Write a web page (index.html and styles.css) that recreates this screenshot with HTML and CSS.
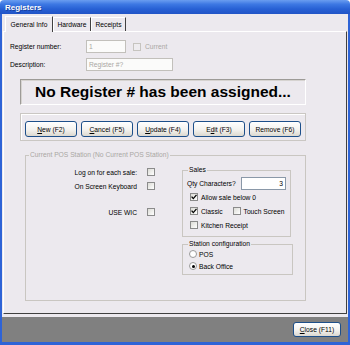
FILE: index.html
```html
<!DOCTYPE html>
<html lang="en">
<head>
    <meta charset="UTF-8">
    <title>Registers</title>
    <link rel="stylesheet" href="styles.css">
</head>
<body>
    <div class="window">
        <div class="titlebar"><span class="title">Registers</span></div>
        <div class="client">
            <div class="tabs">
                <div class="tab tab-general active">General Info</div>
                <div class="tab tab-hardware">Hardware</div>
                <div class="tab tab-receipts">Receipts</div>
            </div>
            <div class="panel">
                <div class="row row-number">
                    <label class="lbl">Register number:</label>
                    <div class="input input-number">1</div>
                    <span class="cb off"></span>
                    <span class="muted">Current</span>
                </div>
                <div class="row row-desc">
                    <label class="lbl">Description:</label>
                    <div class="input input-desc">Register #?</div>
                </div>
                <div class="banner">No Register # has been assigned...</div>
                <div class="btnbar">
                    <button class="btn"><u>N</u>ew (F2)</button>
                    <button class="btn"><u>C</u>ancel (F5)</button>
                    <button class="btn"><u>U</u>pdate (F4)</button>
                    <button class="btn">E<u>d</u>it (F3)</button>
                    <button class="btn">Remove (F6)</button>
                </div>
                <fieldset class="station">
                    <legend>Current POS Station (No Current POS Station)</legend>
                    <div class="cols">
                        <div class="opts">
                            <div class="opt">Log on for each sale: <span class="cb"></span></div>
                            <div class="opt">On Screen Keyboard <span class="cb"></span></div>
                            <div class="opt opt-wic">USE WIC <span class="cb"></span></div>
                        </div>
                        <div class="groups">
                            <fieldset class="grp sales">
                                <legend>Sales</legend>
                                <div class="qty">Qty Characters? <div class="input input-qty">3</div></div>
                                <div class="chk">
                                    <span class="cb"><svg width="6" height="6" viewBox="0 0 6 6"><path d="M0.6 2.6 L2.3 4.6 L5.5 0.8" fill="none" stroke="#000" stroke-width="1.3"/></svg></span>
                                    Allow sale below 0
                                </div>
                                <div class="chk">
                                    <span class="cb"><svg width="6" height="6" viewBox="0 0 6 6"><path d="M0.6 2.6 L2.3 4.6 L5.5 0.8" fill="none" stroke="#000" stroke-width="1.3"/></svg></span>
                                    Classic
                                    <span class="cb cb-touch"></span>
                                    Touch Screen
                                </div>
                                <div class="chk"><span class="cb"></span> Kitchen Receipt</div>
                            </fieldset>
                            <fieldset class="grp config">
                                <legend>Station configuration</legend>
                                <div class="radio"><span class="rb"></span> POS</div>
                                <div class="radio"><span class="rb on"></span> Back Office</div>
                            </fieldset>
                        </div>
                    </div>
                </fieldset>
            </div>
            <div class="footer">
                <button class="btn btn-close"><u>C</u>lose (F11)</button>
            </div>
        </div>
    </div>
</body>
</html>
```

FILE: styles.css
```css
body {
    margin: 0;
    font-family: "Liberation Sans", Arial, sans-serif;
    font-size: 6.7px;
    color: #000;
    background: #fff;
}
.window {
    width: 350px;
    height: 345px;
    display: flex;
    flex-direction: column;
}
.titlebar {
    height: 14px;
    padding-left: 5px;
    display: flex;
    align-items: center;
    border-radius: 4px 4px 0 0;
    background: linear-gradient(#6a9df0, #3d78e3 30%, #2760d4 65%, #2154c6);
}
.title {
    color: #fff;
    font-weight: bold;
    font-size: 8px;
    text-shadow: 1px 1px 0 #163e9c;
}
.client {
    flex: 1;
    display: flex;
    flex-direction: column;
    background: #ece9ee;
    border: solid #2e63d6;
    border-width: 0 2px 3px 2px;
}

/* tabs */
.tabs {
    height: 17px;
    padding-left: 3px;
    display: flex;
    align-items: flex-end;
}
.tab {
    box-sizing: border-box;
    height: 14px;
    line-height: 13px;
    text-align: center;
    border-left: 1px solid #fff;
    border-top: 1px solid #fff;
    border-right: 1px solid #404040;
}
.tab.active {
    height: 16px;
    line-height: 15px;
    margin-bottom: -1px;
    position: relative;
    background: #ece9ee;
}
.tab-general { width: 48px; }
.tab-hardware { width: 38px; }
.tab-receipts { width: 35px; }

/* tab page */
.panel {
    box-sizing: border-box;
    height: 283px;
    margin: 0 1px;
    border: 1px solid;
    border-color: #fff #404040 #404040 #fff;
}
.row {
    height: 13px;
    padding-left: 6px;
    display: flex;
    align-items: center;
}
.row-number { margin-top: 8px; }
.row-desc { margin-top: 5px; }
.lbl { width: 76px; }
.input {
    box-sizing: border-box;
    height: 13px;
    line-height: 11px;
    padding: 0 2px;
    border: 1px solid #c2c0bb;
    background: #fbfbfa;
    color: #a9a7a3;
}
.input-number { width: 40px; }
.input-desc { width: 87px; }
.row-number .cb { margin: 0 4px 0 7px; }
.muted { color: #aaa8a4; }

.banner {
    box-sizing: border-box;
    width: 286px;
    height: 26px;
    margin: 8px 0 0 16px;
    border: 1px solid;
    border-color: #9d9b97 #fff #fff #9d9b97;
    box-shadow: inset 1px 1px 0 #d6d3d0;
    font-size: 15.5px;
    font-weight: bold;
    line-height: 23px;
    text-align: center;
}
.btnbar {
    box-sizing: border-box;
    width: 286px;
    height: 28px;
    margin: 8px 0 0 16px;
    padding: 7px 0 0 4px;
    display: flex;
    gap: 4px;
    border: 1px solid #cac7c3;
    box-shadow: inset 1px 1px 0 #fff;
}
.btn {
    box-sizing: border-box;
    width: 52px;
    height: 16px;
    padding: 0;
    font-family: inherit;
    font-size: 6.7px;
    color: #000;
    border: 1px solid #1d4f8a;
    border-radius: 3px;
    background: linear-gradient(#fff, #f3f2ef 55%, #dcd8cf);
}

/* station group */
.station {
    box-sizing: border-box;
    width: 281px;
    height: 150px;
    min-width: 0;
    margin: 10px 0 0 21px;
    padding: 6px 0 0 0;
    border: 1px solid #c9c6c1;
}
.station > legend {
    margin-left: 3px;
    padding: 0 1px;
    line-height: 8px;
    color: #a9a7a3;
}
.cols { display: flex; }
.opts { width: 129px; }
.opt {
    height: 14px;
    display: flex;
    justify-content: flex-end;
    align-items: center;
    gap: 10px;
}
.opt-wic { margin-top: 12px; }
.groups { margin-left: 27px; }
.grp {
    box-sizing: border-box;
    min-width: 0;
    margin: 0;
    padding: 0;
    border: 1px solid #c9c6c1;
}
.grp legend {
    margin-left: 5px;
    padding: 0 1px;
    line-height: 8px;
}
.sales {
    width: 109px;
    margin-top: 1px;
    padding-bottom: 4px;
}
.qty {
    height: 14px;
    margin-top: 2px;
    padding: 0 4px;
    display: flex;
    align-items: center;
}
.input-qty {
    width: 45px;
    margin-left: auto;
    text-align: right;
    color: #000;
    background: #fff;
    border-color: #8a98a8;
}
.chk {
    height: 14px;
    padding-left: 7px;
    display: flex;
    align-items: center;
    gap: 3px;
}
.cb-touch { margin-left: 7px; }
.config {
    width: 111px;
    margin-top: 3px;
    padding-bottom: 2px;
}
.radio {
    height: 12px;
    padding-left: 6px;
    display: flex;
    align-items: center;
    gap: 2px;
}

/* check boxes and radios */
.cb {
    box-sizing: border-box;
    width: 8px;
    height: 8px;
    display: inline-flex;
    align-items: center;
    justify-content: center;
    border: 1px solid #8b8b8b;
    background: linear-gradient(135deg, #dcdcd6, #fff);
}
.cb.off {
    border-color: #c6c4bf;
    background: #eeecef;
}
.rb {
    box-sizing: border-box;
    width: 8px;
    height: 8px;
    display: inline-flex;
    align-items: center;
    justify-content: center;
    border: 1px solid #9a9a9a;
    border-radius: 50%;
    background: #fff;
}
.rb.on::after {
    content: "";
    width: 3px;
    height: 3px;
    border-radius: 50%;
    background: #000;
}

/* bottom bar */
.footer {
    flex: 1;
    margin-top: 3px;
    padding: 5px 7px 0 0;
    display: flex;
    justify-content: flex-end;
    align-items: flex-start;
    background: #808080;
}
.btn-close {
    width: 48px;
    height: 15px;
}
```
